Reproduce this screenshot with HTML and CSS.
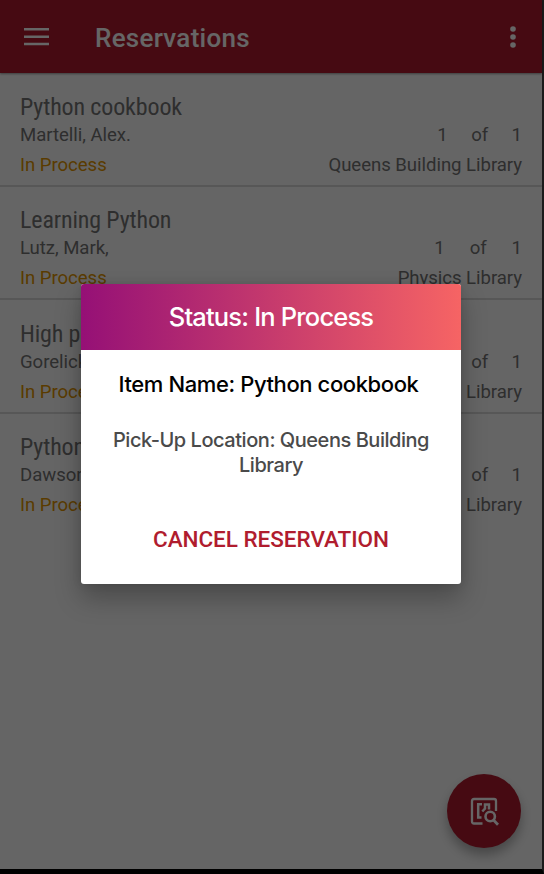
FILE: index.html
```html
<!DOCTYPE html>
<html lang="en">
<head>
<meta charset="utf-8">
<title>Reservations</title>
<link rel="stylesheet" href="styles.css">
</head>
<body>
<div class="app">
  <header class="bar">
    <svg class="menu" width="26" height="18" viewBox="0 0 26 18"><path d="M0 1.3h25M0 8.7h25M0 16h25" stroke="#fff" stroke-width="2.5"/></svg>
    <h1><span>Reservations</span></h1>
    <svg class="more" width="8" height="24" viewBox="0 0 8 24" fill="#fff"><circle cx="4" cy="4" r="2.8"/><circle cx="4" cy="12" r="2.8"/><circle cx="4" cy="20" r="2.8"/></svg>
  </header>
  <main>
    <section class="item">
      <h2><span>Python cookbook</span></h2>
      <div class="line"><span>Martelli, Alex.</span><span class="queue"><span>1</span><span>of</span><span>1</span></span></div>
      <div class="line last"><span class="status">In Process</span><span>Queens Building Library</span></div>
    </section>
    <section class="item">
      <h2><span>Learning Python</span></h2>
      <div class="line"><span>Lutz, Mark,</span><span class="queue wide"><span>1</span><span>of</span><span>1</span></span></div>
      <div class="line last"><span class="status">In Process</span><span>Physics Library</span></div>
    </section>
    <section class="item">
      <h2><span>High perf</span></h2>
      <div class="line"><span>Gorelick</span><span class="queue"><span>1</span><span>of</span><span>1</span></span></div>
      <div class="line last"><span class="status">In Process</span><span>Library</span></div>
    </section>
    <section class="item">
      <h2><span>Python</span></h2>
      <div class="line"><span>Dawson</span><span class="queue"><span>1</span><span>of</span><span>1</span></span></div>
      <div class="line last"><span class="status">In Process</span><span>Library</span></div>
    </section>
  </main>
  <div class="fab">
    <svg width="30" height="30" viewBox="0 0 30 30" fill="none" stroke="#fff">
      <path d="M13.500 27.500H5Q3 27.500 3 25.500V5Q3 3 5 3H25Q27 3 27 5V15" stroke-width="2.300"/>
      <path d="M13 8.200H9.200V21.500H12.500M20 13.500V8.500H16V12.500L13.300 15.500" stroke-width="2.500"/>
      <circle cx="21.200" cy="20.500" r="4.700" stroke-width="2.600"/>
      <path d="M24.500 24L29 28.800" stroke-width="2.800"/>
    </svg>
  </div>
</div>
<div class="overlay">
  <div class="dialog">
    <div class="dialog-head"><span>Status: In Process</span></div>
    <p class="name"><span>Item Name: Python cookbook</span></p>
    <p class="place"><span>Pick-Up Location: Queens Building<br>Library</span></p>
    <div class="cancel"><span>CANCEL RESERVATION</span></div>
  </div>
</div>
</body>
</html>
```
FILE: styles.css
```css
* { box-sizing: border-box; }
body {
  margin: 0;
  width: 544px;
  height: 874px;
  overflow: hidden;
  background: #000;
  font-family: Roboto, "Liberation Sans", sans-serif;
}
h1, h2, p { margin: 0; font-weight: 400; }
.app {
  position: relative;
  width: 544px;
  height: 874px;
  background: #fdfdfd;
  border-right: 2px solid #444;
  border-bottom: 5px solid #000;
}
.bar {
  display: flex;
  align-items: center;
  height: 73px;
  padding: 0 25px 0 24px;
  background: #af1a2e;
  color: #fff;
  box-shadow: 0 1px 2px rgba(0, 0, 0, .4);
}
.bar h1 {
  flex: 1;
  margin-left: 45px;
  padding-top: 3px;
  font-size: 26px;
  line-height: 32px;
  font-weight: 500;
  letter-spacing: .27px;
}
.item {
  height: 113.6px;
  padding: 18.6px 20px 0;
  border-bottom: 2px solid #dadada;
  color: #747474;
}
.item:last-child { border-bottom: 0; }
.item h2 {
  font-family: "Roboto Condensed", Roboto, sans-serif;
  font-stretch: 75%;
  font-size: 24px;
  line-height: 30px;
  letter-spacing: -.14px;
}
.line {
  display: flex;
  justify-content: space-between;
  font-size: 18.600px;
  line-height: 26px;
  letter-spacing: -.05px;
}
.line.last { margin-top: 4px; }
.status { color: #e29500; }
.queue { display: flex; gap: 23.500px; }
.queue.wide { gap: 25px; }
.fab {
  position: absolute;
  left: 447px;
  top: 774px;
  display: flex;
  align-items: center;
  justify-content: center;
  width: 74px;
  height: 74px;
  border-radius: 50%;
  background: #af1a2e;
  box-shadow: 0 7px 12px rgba(0, 0, 0, .3);
}
.overlay {
  position: absolute;
  inset: 0;
  padding: 284px 0 0 81px;
  background: rgba(0, 0, 0, .6);
}
.dialog {
  width: 380px;
  height: 300px;
  overflow: hidden;
  border-radius: 3px;
  background: #fff;
  color: #000;
  font-family: Inter, sans-serif;
  text-align: center;
  box-shadow: 0 14px 26px rgba(0, 0, 0, .27), 0 0 10px rgba(0, 0, 0, .1);
}
.dialog-head {
  height: 66px;
  background: linear-gradient(90deg, #951076, #f66464);
  color: #fff;
  font-size: 25.500px;
  line-height: 66px;
  font-weight: 500;
  letter-spacing: -.83px;
}
.name {
  padding-top: 18px;
  padding-right: 5px;
  font-size: 22px;
  line-height: 32px;
  font-weight: 500;
  letter-spacing: -.4px;
}
.place {
  padding-top: 28px;
  color: #4a4a4a;
  font-size: 20px;
  line-height: 25px;
  font-weight: 450;
  letter-spacing: -.46px;
}
.cancel {
  padding-top: 45px;
  color: #b01c2e;
  font-family: Roboto, sans-serif;
  font-size: 22.500px;
  line-height: 32px;
  font-weight: 500;
  letter-spacing: -.04px;
}
```
